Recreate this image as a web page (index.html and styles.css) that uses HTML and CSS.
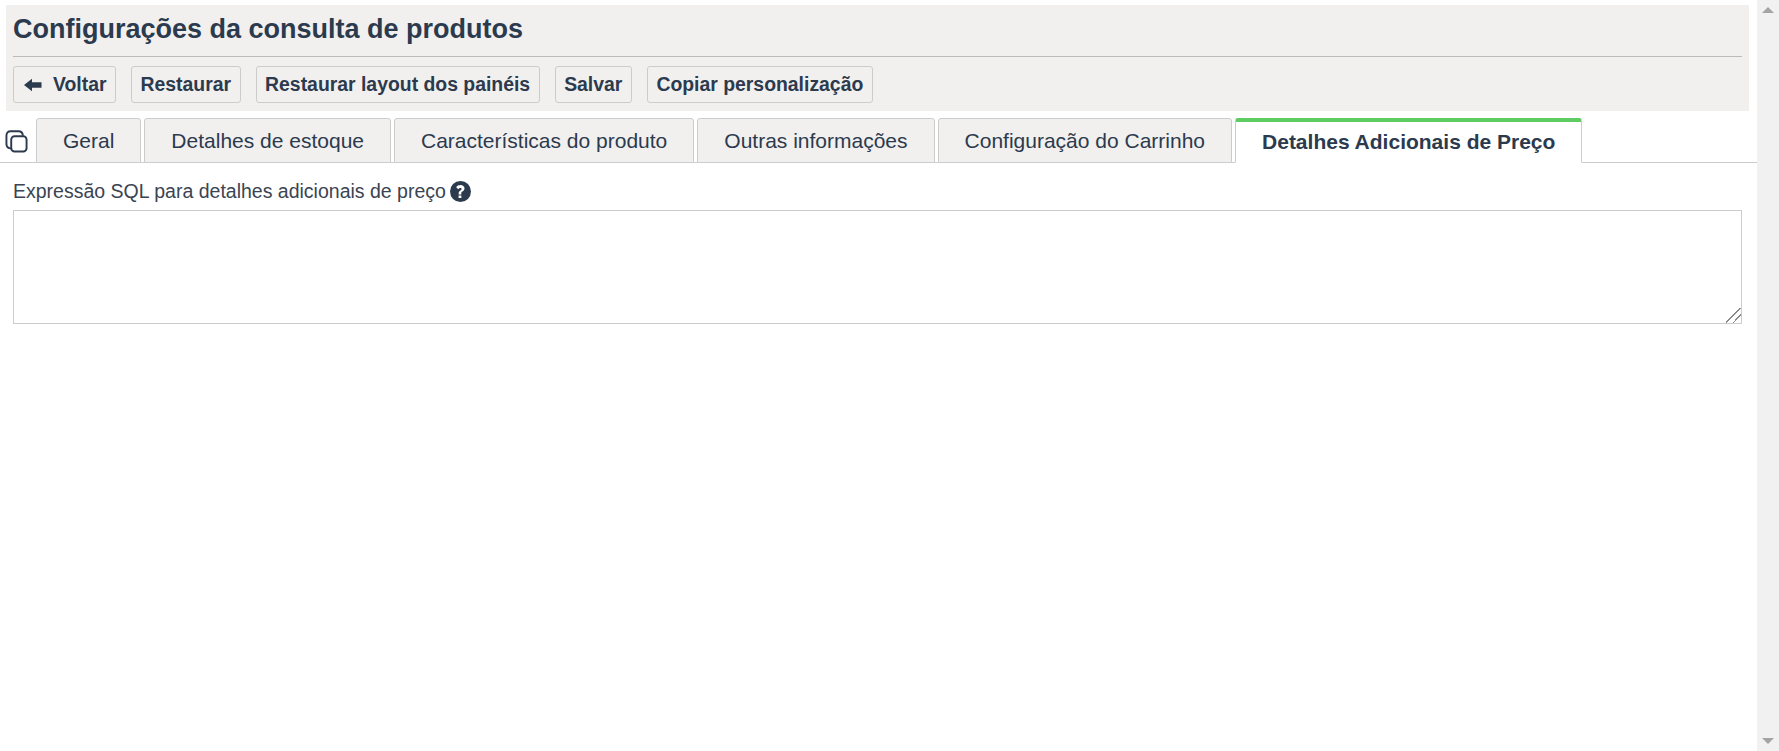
FILE: index.html
```html
<!DOCTYPE html>
<html lang="pt-BR">
<head>
<meta charset="utf-8">
<title>Configurações da consulta de produtos</title>
<link rel="stylesheet" href="styles.css">
</head>
<body>
<div class="shell">
  <main class="page">
    <header class="head">
      <h1 class="title">Configurações da consulta de produtos</h1>
      <div class="actions">
        <button class="btn" type="button">
          <svg class="btn-icon" viewBox="0 0 18 14" aria-hidden="true"><path d="M0 7 8 .8V4.200h9.500v5.600H8v3.400z"/></svg>
          Voltar
        </button>
        <button class="btn" type="button">Restaurar</button>
        <button class="btn" type="button">Restaurar layout dos painéis</button>
        <button class="btn" type="button">Salvar</button>
        <button class="btn" type="button">Copiar personalização</button>
      </div>
    </header>
    <nav class="tabs">
      <svg class="copy-icon" viewBox="0 0 24 24" aria-hidden="true">
        <rect x="6.500" y="6.500" width="16" height="16" rx="3.500"/>
        <path d="M6.500 19.200C3.200 19 1.500 17.200 1.500 14.500V6C1.500 3 3 1.300 6 1.300h8c2.800 0 4.500 1.700 4.700 4.700"/>
      </svg>
      <a class="tab">Geral</a>
      <a class="tab">Detalhes de estoque</a>
      <a class="tab">Características do produto</a>
      <a class="tab">Outras informações</a>
      <a class="tab">Configuração do Carrinho</a>
      <a class="tab tab-active">Detalhes Adicionais de Preço</a>
    </nav>
    <section class="form">
      <label class="field-label" for="sql">Expressão SQL para detalhes adicionais de preço
        <svg class="help-icon" viewBox="0 0 24 24" aria-hidden="true"><circle cx="12" cy="12" r="12"/><path class="help-mark" d="M12.900 15.300h-3v-1c0-1.600.7-2.500 2.100-3.400.9-.6 1.300-1 1.300-1.700 0-.7-.6-1.200-1.500-1.200-1 0-1.600.5-2.300 1.400L7.100 7c1-1.600 2.600-2.500 4.900-2.500 2.500 0 4.600 1.500 4.600 3.900 0 1.900-1.100 2.800-2.500 3.700-.9.600-1.200 1-1.200 1.800zM9.800 16.500h3.200v3H9.800z"/></svg>
      </label>
      <textarea class="field-input" id="sql"></textarea>
    </section>
  </main>
  <aside class="scrollbar" aria-hidden="true">
    <span class="arrow arrow-up"></span>
    <span class="arrow arrow-down"></span>
  </aside>
</div>
</body>
</html>
```
FILE: styles.css
```css
* { box-sizing: border-box; }

html, body {
  height: 100%;
  margin: 0;
}

body {
  font-family: "Liberation Sans", Arial, sans-serif;
  color: #2c3a4e;
  background: #fff;
  overflow: hidden;
}

.shell {
  display: flex;
  height: 100%;
}

.page {
  flex: 1;
  min-width: 0;
  padding-top: 5px;
}

.head {
  margin: 0 8px 0 6px;
  height: 106px;
  padding: 0 7px;
  background: #f1f0ee;
}

.title {
  margin: 0;
  height: 52px;
  border-bottom: 1px solid #bdbbb9;
  font-size: 27px;
  font-weight: 700;
  line-height: 49px;
  color: #2c3a4e;
}

.actions {
  display: flex;
  gap: 15px;
  padding-top: 9px;
}

.btn {
  display: flex;
  align-items: center;
  height: 37px;
  padding: 0 8.500px;
  border: 1px solid #ccc;
  border-radius: 3px;
  background: #f1f0ee;
  font: 700 19.400px "Liberation Sans", Arial, sans-serif;
  color: #2c3a4e;
}

.btn-icon {
  width: 18px;
  height: 14px;
  margin: 0 11px 0 1.500px;
  fill: #2c3a4e;
}

.tabs {
  display: flex;
  align-items: flex-end;
  gap: 3px;
  height: 52px;
  padding: 7px 0 0 5px;
  border-bottom: 1px solid #ccc;
}

.copy-icon {
  flex: none;
  align-self: center;
  width: 23px;
  height: 23px;
  margin: 3px 5px 0 0;
  fill: none;
  stroke: #2c3a4e;
  stroke-width: 2;
}

.tab {
  display: flex;
  align-items: center;
  height: 45px;
  margin-bottom: -1px;
  padding: 0 26px;
  border: 1px solid #ccc;
  border-radius: 3px 3px 0 0;
  background: #f1f0ee;
  font-size: 21px;
}

.tab-active {
  border-top: 4px solid #5fcb63;
  border-bottom-color: #fff;
  background: #fff;
  font-weight: 700;
}

.form {
  padding: 16px 15px 0 13px;
}

.field-label {
  display: flex;
  align-items: center;
  gap: 4px;
  height: 24px;
  margin-bottom: 7px;
  font-size: 19.500px;
  color: #3a4452;
}

.help-icon {
  width: 21px;
  height: 21px;
  fill: #2c3a4e;
}

.help-mark { fill: #fff; }

.field-input {
  display: block;
  width: 100%;
  height: 114px;
  border: 1px solid #ccc;
  border-radius: 0;
  outline: none;
  background: #fff;
}

.field-input::-webkit-resizer {
  background:
    linear-gradient(135deg, transparent 0 46%, #888 46% 51%, transparent 51% 70%, #888 70% 75%, transparent 75%);
}

.scrollbar {
  flex: none;
  display: flex;
  flex-direction: column;
  justify-content: space-between;
  align-items: center;
  width: 22px;
  padding: 7px 0;
  background: #f1f1f1;
}

.arrow {
  width: 0;
  height: 0;
  border-left: 6px solid transparent;
  border-right: 6px solid transparent;
}

.arrow-up { border-bottom: 6px solid #a3a3a3; }
.arrow-down { border-top: 6px solid #a3a3a3; }
```
